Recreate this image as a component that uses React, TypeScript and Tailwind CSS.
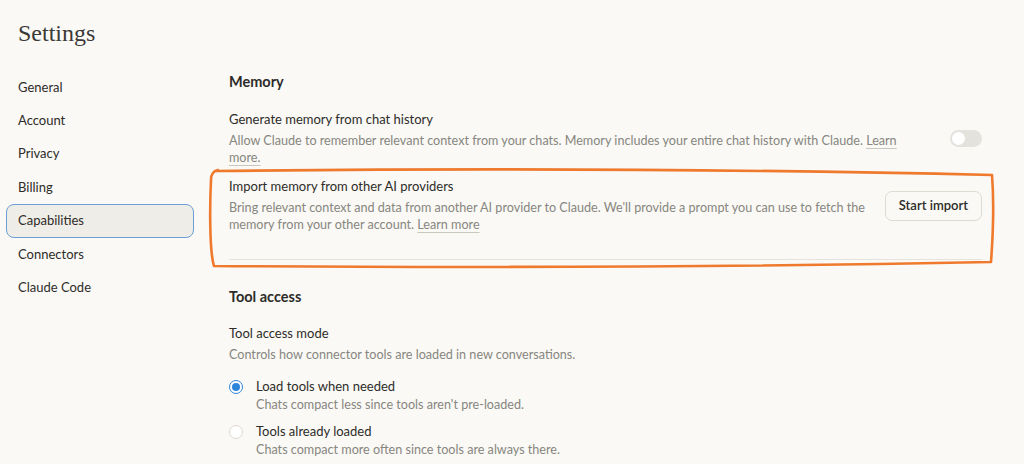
import React from 'react';

const navItems = ['General', 'Account', 'Privacy', 'Billing', 'Capabilities', 'Connectors', 'Claude Code'];

function LearnLink({ children }: { children: React.ReactNode }) {
  return <span className="underline decoration-[#c9c6bd] underline-offset-[3px]">{children}</span>;
}

function Radio({ checked }: { checked?: boolean }) {
  return checked ? (
    <span className="mt-[2px] flex h-[14px] w-[14px] items-center justify-center rounded-full border border-[#2c84db] bg-white">
      <span className="h-[8px] w-[8px] rounded-full bg-[#2c84db]" />
    </span>
  ) : (
    <span className="mt-[2px] h-[14px] w-[14px] rounded-full border border-[#dcd9d2] bg-white" />
  );
}

export default function App() {
  return (
    <div
      className="relative h-[464px] w-[1024px] overflow-hidden bg-[#faf9f5] text-[#2d2c29]"
      style={{ fontFamily: 'Lato, "Noto Sans", sans-serif' }}
    >
      <div className="flex">
        {/* sidebar */}
        <aside className="w-[229px] shrink-0 pl-[6px] pt-[18px]">
          <h1 className="pl-[12px] text-[24px] leading-[30px] text-[#3a3935]" style={{ fontFamily: '"Liberation Serif", serif' }}>
            Settings
          </h1>
          <nav className="mt-[23px] flex w-[188px] flex-col text-[13px]">
            {navItems.map((item) =>
              item === 'Capabilities' ? (
                <div
                  key={item}
                  className="flex h-[34px] items-center rounded-[8px] border-[1.5px] border-[#6a9fd6] bg-[#efede7] pl-[11px]"
                >
                  {item}
                </div>
              ) : (
                <div key={item} className="flex h-[33.3px] items-center pl-[12px]">
                  {item}
                </div>
              ),
            )}
          </nav>
        </aside>

        {/* main */}
        <main className="w-[753px] pt-[73px] text-[12.6px]">
          <h2 className="text-[14.5px] font-bold leading-[18px]">Memory</h2>

          <div className="mt-[19px] flex items-start justify-between">
            <div className="w-[674px]">
              <div className="text-[13px] leading-[18px]">Generate memory from chat history</div>
              <p className="mt-[4px] leading-[17px] text-[#878680]">
                Allow Claude to remember relevant context from your chats. Memory includes your entire chat history with Claude.{' '}
                <LearnLink>Learn more.</LearnLink>
              </p>
            </div>
            <div className="mt-[20px] flex h-[17px] w-[32px] items-center rounded-full bg-[#e4e2dc] px-[2px]">
              <span className="h-[13px] w-[13px] rounded-full bg-white" />
            </div>
          </div>

          <div className="mt-[11px] flex items-start justify-between">
            <div className="w-[638px]">
              <div className="text-[13px] leading-[18px]">Import memory from other AI providers</div>
              <p className="mt-[4px] leading-[17px] text-[#878680]">
                Bring relevant context and data from another AI provider to Claude. We'll provide a prompt you can use to fetch the memory from your other account.{' '}
                <LearnLink>Learn more</LearnLink>
              </p>
            </div>
            <button className="mt-[14px] h-[30px] rounded-[7px] border border-[#dedbd3] bg-[#faf9f5] px-[13px] text-[13px] font-semibold">
              Start import
            </button>
          </div>

          <div className="mt-[26px] h-px bg-[#e6e3dc]" />

          <h2 className="mt-[28px] text-[14.5px] font-bold leading-[18px]">Tool access</h2>

          <div className="mt-[18px] text-[13px] leading-[18px]">Tool access mode</div>
          <p className="mt-[4px] leading-[17px] text-[#878680]">Controls how connector tools are loaded in new conversations.</p>

          <div className="mt-[15px] flex flex-col gap-[10px]">
            <div className="flex gap-[13px]">
              <Radio checked />
              <div>
                <div className="text-[13px] leading-[17px]">Load tools when needed</div>
                <div className="mt-[1px] leading-[17px] text-[#878680]">Chats compact less since tools aren't pre-loaded.</div>
              </div>
            </div>
            <div className="flex gap-[13px]">
              <Radio />
              <div>
                <div className="text-[13px] leading-[17px]">Tools already loaded</div>
                <div className="mt-[1px] leading-[17px] text-[#878680]">Chats compact more often since tools are always there.</div>
              </div>
            </div>
          </div>
        </main>
      </div>

      {/* hand-drawn annotation */}
      <svg className="pointer-events-none absolute left-0 top-0" width="1024" height="464" viewBox="0 0 1024 464" fill="none">
        <path
          d="M216 171 C 400 169, 700 168, 992 175 C 994 200, 993 235, 991 262 C 800 266, 500 268, 214 266 C 209 250, 210 200, 211 180 C 211 174, 213 171, 218 170"
          stroke="#ef7a2e"
          strokeWidth="2.6"
          strokeLinecap="round"
          strokeLinejoin="round"
        />
      </svg>
    </div>
  );
}
